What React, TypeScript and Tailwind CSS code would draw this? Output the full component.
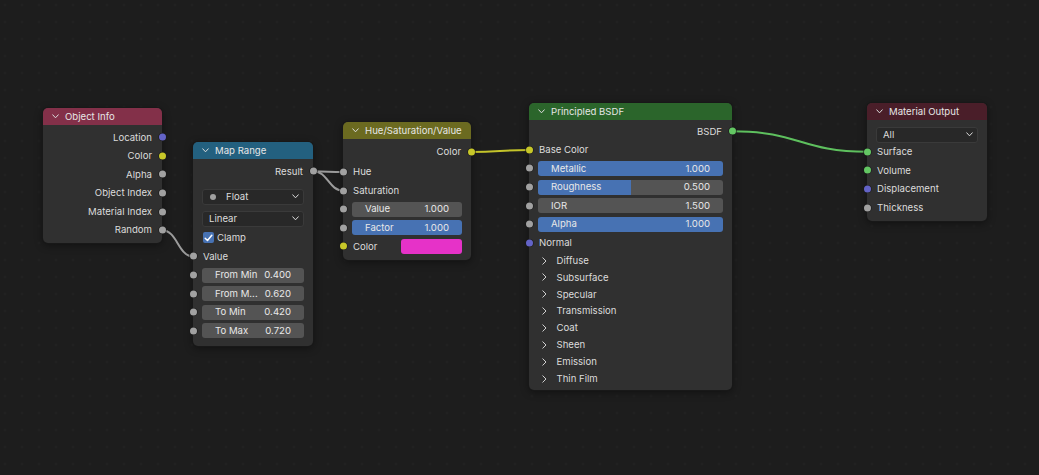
import React from "react";

const GRAY = "bg-[#a1a1a1]";
const YELLOW = "bg-[#c7c729]";
const PURPLE = "bg-[#6363c7]";
const GREEN = "bg-[#63c763]";

function ChevDown({ className = "" }: { className?: string }) {
  return (
    <svg width="7" height="5" viewBox="0 0 7 5" className={className}>
      <polyline points="0.7,0.8 3.5,3.8 6.3,0.8" fill="none" stroke="#dcdcdc" strokeWidth="1" strokeLinecap="round" strokeLinejoin="round" />
    </svg>
  );
}

function ChevRight() {
  return (
    <svg width="5" height="8" viewBox="0 0 5 8">
      <polyline points="0.8,0.8 4,4 0.8,7.2" fill="none" stroke="#d0d0d0" strokeWidth="1" strokeLinecap="round" strokeLinejoin="round" />
    </svg>
  );
}

function Socket({ color, side }: { color: string; side: "l" | "r" }) {
  return (
    <span
      className={`absolute top-1/2 h-[7px] w-[7px] -translate-y-1/2 rounded-full shadow-[0_0_0_0.6px_#1a1a1a] ${color} ${
        side === "l" ? "left-[-3.5px]" : "right-[-3.5px]"
      }`}
    />
  );
}

function Node({
  pos,
  header,
  title,
  body,
  children,
}: {
  pos: string;
  header: string;
  title: string;
  body: string;
  children: React.ReactNode;
}) {
  return (
    <div className={`absolute ${pos} rounded-[5px] bg-[#303030] shadow-[0_0_0_1px_#181818,0_2px_8px_rgba(0,0,0,0.45)]`}>
      <div className={`flex h-[17px] items-center gap-[6px] rounded-t-[5px] pl-[9px] ${header}`}>
        <ChevDown />
        <span className="leading-none text-[#e6e6e6]">{title}</span>
      </div>
      <div className={body}>{children}</div>
    </div>
  );
}

function OutRow({ label, color }: { label: string; color: string }) {
  return (
    <div className="relative flex h-[18.6px] items-center justify-end pr-[10px]">
      <span className="leading-none">{label}</span>
      <Socket color={color} side="r" />
    </div>
  );
}

function InRow({ label, color }: { label: string; color?: string }) {
  return (
    <div className="relative flex h-[18.6px] items-center pl-[10px]">
      <span className="leading-none">{label}</span>
      {color && <Socket color={color} side="l" />}
    </div>
  );
}

function FieldRow({
  label,
  value,
  kind,
  socket = GRAY,
}: {
  label: string;
  value: string;
  kind: "gray" | "blue" | "half";
  socket?: string;
}) {
  return (
    <div className="relative flex h-[18.6px] items-center">
      <Socket color={socket} side="l" />
      <div
        className={`relative mx-[9px] flex h-[15px] flex-1 items-center justify-between overflow-hidden rounded-[3px] px-[13px] text-[#e8e8e8] ${
          kind === "blue" ? "bg-[#4772b3]" : "bg-[#545454]"
        }`}
      >
        {kind === "half" && <div className="absolute inset-y-0 left-0 w-1/2 bg-[#4772b3]" />}
        <span className="relative leading-none">{label}</span>
        <span className="relative leading-none">{value}</span>
      </div>
    </div>
  );
}

function PanelRow({ label }: { label: string }) {
  return (
    <div className="flex h-[16.9px] items-center pl-[13px]">
      <ChevRight />
      <span className="ml-[9.5px] leading-none">{label}</span>
    </div>
  );
}

function bez(x1: number, y1: number, x2: number, y2: number) {
  const d = Math.max(Math.abs(x2 - x1) * 0.5, 10);
  return `M${x1},${y1} C${x1 + d},${y1} ${x2 - d},${y2} ${x2},${y2}`;
}

export default function App() {
  return (
    <div className="relative h-[475px] w-[1039px] overflow-hidden bg-[#1d1d1d] bg-[radial-gradient(circle_at_center,#242424_0.8px,transparent_1.3px)] bg-[length:17px_17px] bg-[position:-3.5px_-3.5px] font-['Inter','Noto_Sans',sans-serif] text-[9.6px] text-[#dcdcdc]">
      <svg className="absolute inset-0" width="1039" height="475">
        <g fill="none" strokeLinecap="round">
          <path d={bez(162, 230.3, 193.5, 256.5)} stroke="#9c9c9c" strokeWidth="2" />
          <path d={bez(313, 171.3, 343.5, 172)} stroke="#9c9c9c" strokeWidth="2" />
          <path d={bez(313, 171.3, 343.5, 190.6)} stroke="#9c9c9c" strokeWidth="2" />
          <path d={bez(471, 152, 529, 150)} stroke="#c4c42a" strokeWidth="2" />
          <path d={bez(732.5, 131.3, 867.5, 151.8)} stroke="#5ec05e" strokeWidth="2" />
        </g>
      </svg>

      {/* Object Info */}
      <Node pos="left-[43px] top-[108px] w-[119px]" header="bg-[#833049]" title="Object Info" body="pt-[3px] pb-[3.5px]">
        <OutRow label="Location" color={PURPLE} />
        <OutRow label="Color" color={YELLOW} />
        <OutRow label="Alpha" color={GRAY} />
        <OutRow label="Object Index" color={GRAY} />
        <OutRow label="Material Index" color={GRAY} />
        <OutRow label="Random" color={GRAY} />
      </Node>

      {/* Map Range */}
      <Node pos="left-[193px] top-[142px] w-[120px]" header="bg-[#23607f]" title="Map Range" body="pt-[3px] pb-[6px]">
        <OutRow label="Result" color={GRAY} />
        <div className="mx-[9px] mt-[8px] flex h-[16px] items-center rounded-[3px] border border-[#3a3a3a] bg-[#282828] pl-[7px] pr-[4px]">
          <span className="h-[6px] w-[6px] rounded-full bg-[#a1a1a1]" />
          <span className="ml-[10px] flex-1 leading-none">Float</span>
          <ChevDown />
        </div>
        <div className="mx-[9px] mt-[6px] flex h-[16px] items-center rounded-[3px] border border-[#3a3a3a] bg-[#282828] pl-[6px] pr-[4px]">
          <span className="flex-1 leading-none">Linear</span>
          <ChevDown />
        </div>
        <div className="mt-[2px] flex h-[18.6px] items-center pl-[10px]">
          <span className="flex h-[11px] w-[11px] items-center justify-center rounded-[2px] bg-[#4772b3]">
            <svg width="9" height="8" viewBox="0 0 9 8">
              <polyline points="1.2,4.2 3.5,6.5 7.8,1.3" fill="none" stroke="#ffffff" strokeWidth="1.5" strokeLinecap="round" strokeLinejoin="round" />
            </svg>
          </span>
          <span className="ml-[3px] leading-none">Clamp</span>
        </div>
        <InRow label="Value" color={GRAY} />
        <FieldRow label="From Min" value="0.400" kind="gray" />
        <FieldRow label="From M..." value="0.620" kind="gray" />
        <FieldRow label="To Min" value="0.420" kind="gray" />
        <FieldRow label="To Max" value="0.720" kind="gray" />
      </Node>

      {/* Hue/Saturation/Value */}
      <Node pos="left-[343px] top-[122px] w-[128px]" header="bg-[#6b6a20]" title="Hue/Saturation/Value" body="pt-[3.7px] pb-[4px]">
        <OutRow label="Color" color={YELLOW} />
        <div className="mt-[1.4px]">
          <InRow label="Hue" color={GRAY} />
          <InRow label="Saturation" color={GRAY} />
          <FieldRow label="Value" value="1.000" kind="gray" />
          <FieldRow label="Factor" value="1.000" kind="blue" />
          <div className="relative flex h-[18.6px] items-center pl-[10px] pr-[9px]">
            <Socket color={YELLOW} side="l" />
            <span className="flex-1 leading-none">Color</span>
            <span className="h-[15px] w-[61px] rounded-[3px] bg-[#e632c8]" />
          </div>
        </div>
      </Node>

      {/* Principled BSDF */}
      <Node pos="left-[529px] top-[103px] w-[203px]" header="bg-[#2b652b]" title="Principled BSDF" body="pt-[2px] pb-[3px]">
        <OutRow label="BSDF" color={GREEN} />
        <InRow label="Base Color" color={YELLOW} />
        <FieldRow label="Metallic" value="1.000" kind="blue" />
        <FieldRow label="Roughness" value="0.500" kind="half" />
        <FieldRow label="IOR" value="1.500" kind="gray" />
        <FieldRow label="Alpha" value="1.000" kind="blue" />
        <InRow label="Normal" color={PURPLE} />
        <PanelRow label="Diffuse" />
        <PanelRow label="Subsurface" />
        <PanelRow label="Specular" />
        <PanelRow label="Transmission" />
        <PanelRow label="Coat" />
        <PanelRow label="Sheen" />
        <PanelRow label="Emission" />
        <PanelRow label="Thin Film" />
      </Node>

      {/* Material Output */}
      <Node pos="left-[867px] top-[103px] w-[120px]" header="bg-[#4a1e29]" title="Material Output" body="pt-[6.5px] pb-[4px]">
        <div className="mx-[9px] flex h-[16px] items-center rounded-[3px] border border-[#3a3a3a] bg-[#282828] pl-[6px] pr-[4px]">
          <span className="flex-1 leading-none">All</span>
          <ChevDown />
        </div>
        <InRow label="Surface" color={GREEN} />
        <InRow label="Volume" color={GREEN} />
        <InRow label="Displacement" color={PURPLE} />
        <InRow label="Thickness" color={GRAY} />
      </Node>
    </div>
  );
}
